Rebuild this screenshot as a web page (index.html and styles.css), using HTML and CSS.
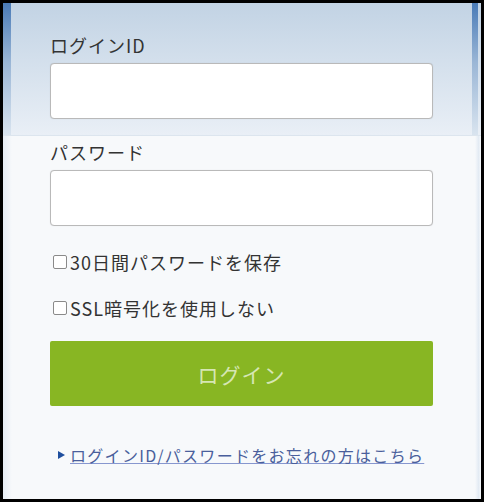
FILE: index.html
```html
<!DOCTYPE html>
<html>
<head>
    <title>ログイン</title>
    <link rel="stylesheet" href="styles.css">
</head>
<body>
    <div class="frame">
        <div class="login-box">
            <div class="top-area">
                <label class="field-label" for="loginId">ログインID</label>
                <input class="field-input" type="text" id="loginId">
            </div>
            <div class="bottom-area">
                <label class="field-label" for="password">パスワード</label>
                <input class="field-input" type="password" id="password">

                <label class="check-row">
                    <span class="check-box"></span>30日間パスワードを保存
                </label>
                <label class="check-row">
                    <span class="check-box"></span>SSL暗号化を使用しない
                </label>

                <button class="btn-login">ログイン</button>

                <div class="forgot">
                    <span class="arrow"></span>
                    <a href="#">ログインID/パスワードをお忘れの方はこちら</a>
                </div>
            </div>
        </div>
    </div>
</body>
</html>
```

FILE: styles.css
```css
body {
    margin: 0;
    font-family: "Noto Sans CJK JP", "Noto Sans", sans-serif;
    background: white;
}

.frame {
    width: 484px;
    height: 502px;
    box-sizing: border-box;
    border: 3px solid #000;
    background: #f7f9fb;
}

.login-box {
    height: 100%;
    display: flex;
    flex-direction: column;
}

.top-area {
    padding: 31px 48px 16px 47px;
    background:
        linear-gradient(to bottom, #4a7bb7, #9ab6d6 45%, #d9e4ef) left top / 8px 100% no-repeat,
        linear-gradient(to bottom, #4a7bb7, #9ab6d6 45%, #d9e4ef) right 3px top / 6px 100% no-repeat,
        linear-gradient(to bottom, #c2d3e4, #e9eff6);
    border-bottom: 1px solid #dce5ee;
    display: flex;
    flex-direction: column;
}

.bottom-area {
    flex: 1;
    padding: 5px 48px 0 47px;
    background:
        linear-gradient(to right, #e6edf5, #f7f9fb) left top / 9px 100% no-repeat,
        linear-gradient(to left, #f7f9fb, #e3ebf4 40%, #f7f9fb) right top / 6px 100% no-repeat,
        #f7f9fb;
    display: flex;
    flex-direction: column;
}

.field-label {
    font-size: 18px;
    line-height: 22px;
    letter-spacing: 1px;
    color: #333;
    margin-bottom: 7px;
}

.field-input {
    height: 56px;
    box-sizing: border-box;
    border: 1px solid #b9b9b9;
    border-radius: 4px;
    background: white;
    box-shadow: 0 0 1px rgba(0,0,0,0.15);
    margin: 0;
}

.check-row {
    display: flex;
    align-items: center;
    font-size: 18px;
    line-height: 22px;
    letter-spacing: 1px;
    color: #333;
    height: 22px;
}

.bottom-area .field-input + .check-row {
    margin-top: 25px;
}

.check-row + .check-row {
    margin-top: 24px;
}

.check-box {
    width: 14px;
    height: 14px;
    box-sizing: border-box;
    border: 1px solid #8a8a8a;
    border-radius: 2px;
    background: white;
    margin: 0 3px 0 3px;
}

.btn-login {
    margin-top: 22px;
    height: 65px;
    border: none;
    border-radius: 2px;
    background: #88b623;
    color: #d6e6b4;
    font-family: inherit;
    font-size: 21px;
    letter-spacing: 1px;
}

.forgot {
    margin-top: 38px;
    display: flex;
    align-items: center;
    font-size: 16px;
    line-height: 22px;
    letter-spacing: 1.3px;
    padding-left: 8px;
}

.arrow {
    width: 0;
    height: 0;
    border-top: 4px solid transparent;
    border-bottom: 4px solid transparent;
    border-left: 7px solid #1f4f9e;
    margin-right: 5px;
}

.forgot a {
    color: #4a5f9c;
    text-decoration: underline;
    text-decoration-color: #8797cf;
}
```
